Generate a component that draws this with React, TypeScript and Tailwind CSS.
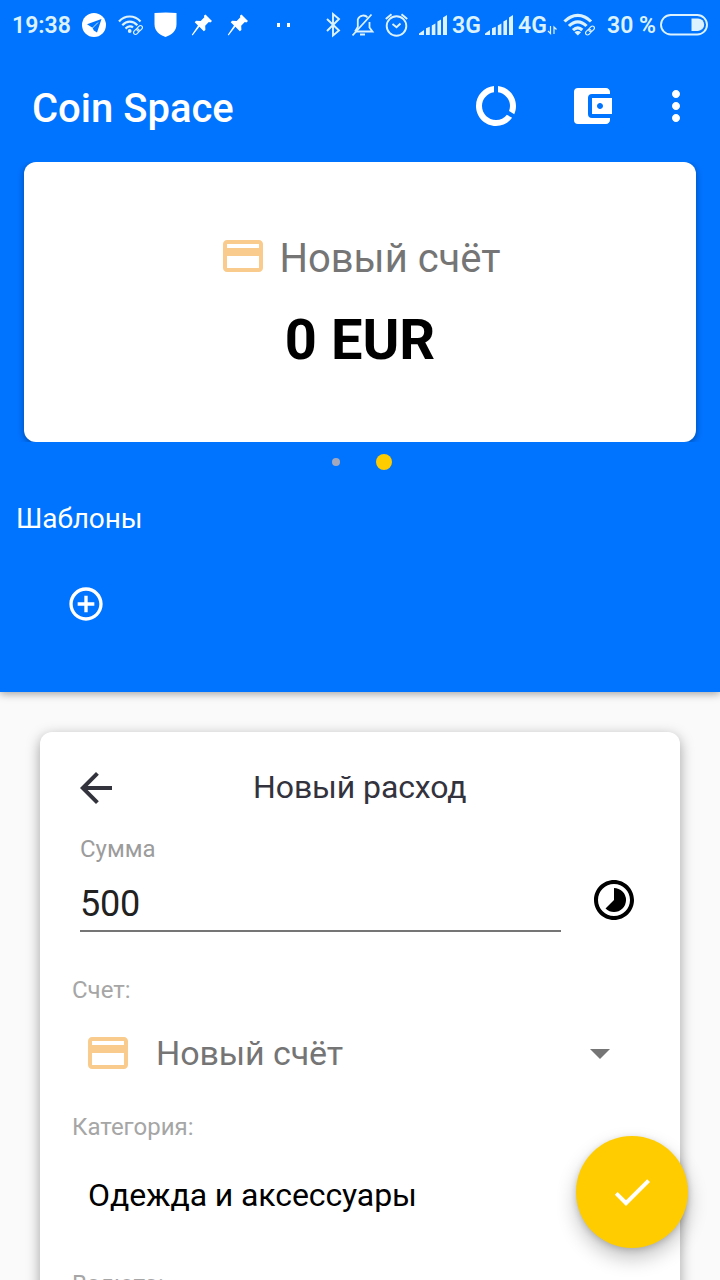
import type { ReactNode } from "react";
import {
  MdAccountBalanceWallet,
  MdAddCircleOutline,
  MdArrowBack,
  MdArrowDropDown,
  MdCheck,
  MdCreditCard,
  MdDataUsage,
  MdMoreVert,
  MdTimelapse,
} from "react-icons/md";

function Glyph({ w, className, children }: { w: number; className?: string; children: ReactNode }) {
  return (
    <svg width={w} height={50} viewBox={`0 0 ${w} 50`} fill="none" className={`shrink-0 ${className ?? ""}`}>
      {children}
    </svg>
  );
}

function LinkMark({ x, y }: { x: number; y: number }) {
  return (
    <g transform={`translate(${x} ${y}) rotate(-45)`} stroke="currentColor" strokeWidth="1.2">
      <rect x="-5.5" y="-2" width="6.4" height="4" rx="2" />
      <rect x="-0.9" y="-2" width="6.4" height="4" rx="2" />
    </g>
  );
}

function Pin({ className }: { className?: string }) {
  return (
    <Glyph w={22} className={className}>
      <path
        d="M14.5 14.5 21 21l-1.6 1.4-1.600-.5-3.600 3.800.2 4.200-1.600 1.300-4.400-4.400L1.600 35.600.8 34.800 7 25.600l-3.300-3.400 1.400-1.500 4.600.2 3.600-3.600-.4-1.500z"
        fill="currentColor"
      />
    </Glyph>
  );
}

function Signal({ className }: { className?: string }) {
  return (
    <Glyph w={28} className={className}>
      <path
        d="M0 35v-1.400L5 30v5zM7 35v-6.700l3.800-1.600V35zM12.800 35v-9.600l3.600-1.800V35zM18.400 35V21.600l3.600-2V35zM24 35V17.400l4-2.400v20z"
        fill="currentColor"
      />
    </Glyph>
  );
}

function StatusBar() {
  return (
    <div className="flex h-[50px] items-center pl-3 text-[23px] font-semibold text-[#dcf3ff]">
      <span className="mt-0.5 w-[58px] shrink-0 whitespace-nowrap">19:38</span>
      <Glyph w={24} className="ml-3 text-white">
        <circle cx="12" cy="25" r="12" fill="currentColor" />
        <path d="M5 24.300 19.500 19 15 32.500 11.800 30.500 10.500 27.800z" fill="#0073ff" />
        <path d="m10.500 28 5.500-5.500" stroke="white" strokeWidth=".8" />
      </Glyph>
      <Glyph w={26} className="ml-3">
        <g stroke="currentColor" strokeWidth="2.200">
          <path d="M1 21.500C7 14.800 16.500 14.800 22.500 21.500" />
          <path d="M4.300 25.200C8.700 20.400 14.900 20.400 19.300 25.200" />
          <path d="M7.500 28.600C10.300 25.800 13.300 25.800 15 27.500" />
        </g>
        <circle cx="11.700" cy="31" r="1.900" fill="currentColor" />
        <LinkMark x={20} y={30} />
      </Glyph>
      <Glyph w={24} className="ml-[10px] text-white">
        <path d="M.5 13Q12 11.800 22.500 13V24C22.500 31 18 34.500 11.500 37 5 34.500.5 31 .5 24z" fill="currentColor" />
      </Glyph>
      <Pin className="ml-[13px] text-white" />
      <Pin className="ml-[14px] text-white" />
      <Glyph w={15} className="ml-[27px] text-white">
        <path d="M1 23h3v4H1zM11 23h3v4h-3z" fill="currentColor" />
      </Glyph>
      <Glyph w={15} className="ml-[35px]">
        <path d="m1 19 12 11.500-6 5V14l6 5L1 31" stroke="currentColor" strokeWidth="1.900" />
      </Glyph>
      <Glyph w={23} className="ml-[11px]">
        <g stroke="currentColor" strokeWidth="1.800">
          <path d="M4 31.500h16.500l-3-4V22M15.500 17.500C13.500 14.600 7.500 14.500 5.800 19.500V27L3 31.500" />
          <path d="M.5 35.500 19.500 14.500" />
          <path d="M8 34.500h5" strokeWidth="2" />
        </g>
      </Glyph>
      <Glyph w={24} className="ml-[10px]">
        <g stroke="currentColor" strokeWidth="1.900">
          <circle cx="11.500" cy="26" r="9.800" />
          <path d="m7.500 24 4 3.300 4-3.800M.8 19 6.500 14.200M22.200 19l-5.700-4.800" />
        </g>
      </Glyph>
      <Signal className="ml-[10px]" />
      <span className="ml-[5px] mt-0.5 w-[28px] shrink-0">3G</span>
      <Signal className="ml-[5px]" />
      <span className="ml-[5px] mt-0.5 w-[28px] shrink-0">4G</span>
      <Glyph w={11} className="ml-px">
        <path d="M1 31l2.500 2.500V26M9.500 29.500 7 27v7" stroke="currentColor" strokeWidth="1.200" />
      </Glyph>
      <Glyph w={34} className="ml-[5px]">
        <g stroke="currentColor" strokeWidth="3.200">
          <path d="M1.500 21.500C9.500 13.400 20 13.400 28 21.500" />
          <path d="M6 26C11.500 20.400 18 20.400 23.500 26" />
          <path d="M10 30.200C13 27.400 16.500 27.400 19.300 30" />
        </g>
        <path d="m11.500 32.200 3.300 3.300 3.300-3.300q-3.300-2.500-6.600 0z" fill="currentColor" />
        <LinkMark x={27} y={30.5} />
      </Glyph>
      <span className="ml-[10px] mt-0.5 w-[48px] shrink-0 whitespace-nowrap">30 %</span>
      <Glyph w={50} className="ml-[5px]">
        <rect x="1" y="15" width="46" height="19.500" rx="9.750" stroke="currentColor" strokeWidth="1.900" />
        <path d="M31.500 18.500h6.500a6.200 6.200 0 0 1 0 12.400h-6.500z" fill="currentColor" />
      </Glyph>
    </div>
  );
}

function Toolbar() {
  return (
    <div className="flex h-28 items-center pl-8 pr-5 text-white">
      <h1 className="mt-1.5 flex-1 text-[40px] font-medium leading-none">Coin Space</h1>
      <MdDataUsage size={48} />
      <MdAccountBalanceWallet size={48} className="ml-12" />
      <MdMoreVert size={48} className="ml-9" />
    </div>
  );
}

function AccountCard() {
  return (
    <div className="mx-6 flex h-[280px] flex-col items-center rounded-xl bg-white pt-[70px] shadow-[0_2px_6px_rgba(0,0,0,0.35)] [clip-path:inset(0_-12px)]">
      <div className="flex h-12 items-center gap-3 text-[40px] leading-[48px] text-[#757575]">
        <MdCreditCard size={48} className="text-[#f9cc8e]" />
        <span className="mt-1.5">Новый счёт</span>
      </div>
      <div className="mt-7 text-[56px] font-bold leading-[64px] text-black">0 EUR</div>
    </div>
  );
}

export default function App() {
  return (
    <div className="relative h-[1280px] w-[720px] overflow-hidden bg-[#fafafa] font-['Roboto',sans-serif]">
      <header className="h-[692px] bg-[#0073ff] shadow-[0_2px_8px_rgba(0,0,0,0.35)]">
        <StatusBar />
        <Toolbar />
        <AccountCard />
        <div className="flex h-10 items-center pl-[332px]">
          <span className="size-2 rounded-full bg-[#a3a8bd]" />
          <span className="ml-9 size-4 rounded-full bg-[#ffcc00]" />
        </div>
        <h2 className="mt-[21px] pl-4 text-[28px] leading-8 tracking-[-0.1px] text-white">Шаблоны</h2>
        <MdAddCircleOutline size={40} className="ml-[66px] mt-[49px] text-white" />
      </header>

      <main className="mx-10 mt-10 h-[620px] rounded-xl bg-white shadow-[0_4px_14px_rgba(0,0,0,0.36)]">
        <div className="flex h-28 items-center pl-8">
          <MdArrowBack size={48} className="text-[#33333d]" />
          <h2 className="-mt-0.5 ml-[133px] text-[32px] leading-none tracking-[-0.1px] text-[#33333d]">Новый расход</h2>
        </div>
        <div className="-mt-2.5 flex px-10">
          <div className="w-[481px]">
            <label className="block text-2xl leading-[30px] text-[#9c9c9c]">Сумма</label>
            <div className="mt-4 h-[52px] border-b-2 border-[#757575] text-4xl leading-[48px] tracking-[-0.2px] text-[#212121]">500</div>
          </div>
          <MdTimelapse size={48} className="ml-[29px] mt-[42px] text-black" />
        </div>
        <div className="mt-[43px] pl-8 text-2xl leading-[30px] text-[#a6a6a6]">Счет:</div>
        <div className="mt-6 flex h-12 items-center pl-11">
          <MdCreditCard size={48} className="text-[#f9cc8e]" />
          <span className="ml-6 w-[420px] text-[34px] leading-none tracking-[-0.1px] text-[#757575]">Новый счёт</span>
          <MdArrowDropDown size={48} className="text-[#757575]" />
        </div>
        <div className="mt-[35px] pl-8 text-2xl leading-[30px] text-[#a6a6a6]">Категория:</div>
        <div className="mt-[33px] pl-12 text-[32px] leading-10 tracking-[-0.1px] text-black">Одежда и аксессуары</div>
        <div className="mt-[54px] pl-8 text-2xl leading-[30px] text-[#a6a6a6]">Валюта:</div>
      </main>

      <button className="absolute bottom-8 right-8 flex size-28 items-center justify-center rounded-full bg-[#ffcc00] text-white shadow-[0_10px_20px_rgba(0,0,0,0.24),0_2px_6px_rgba(0,0,0,0.16)]">
        <MdCheck size={48} />
      </button>
    </div>
  );
}
